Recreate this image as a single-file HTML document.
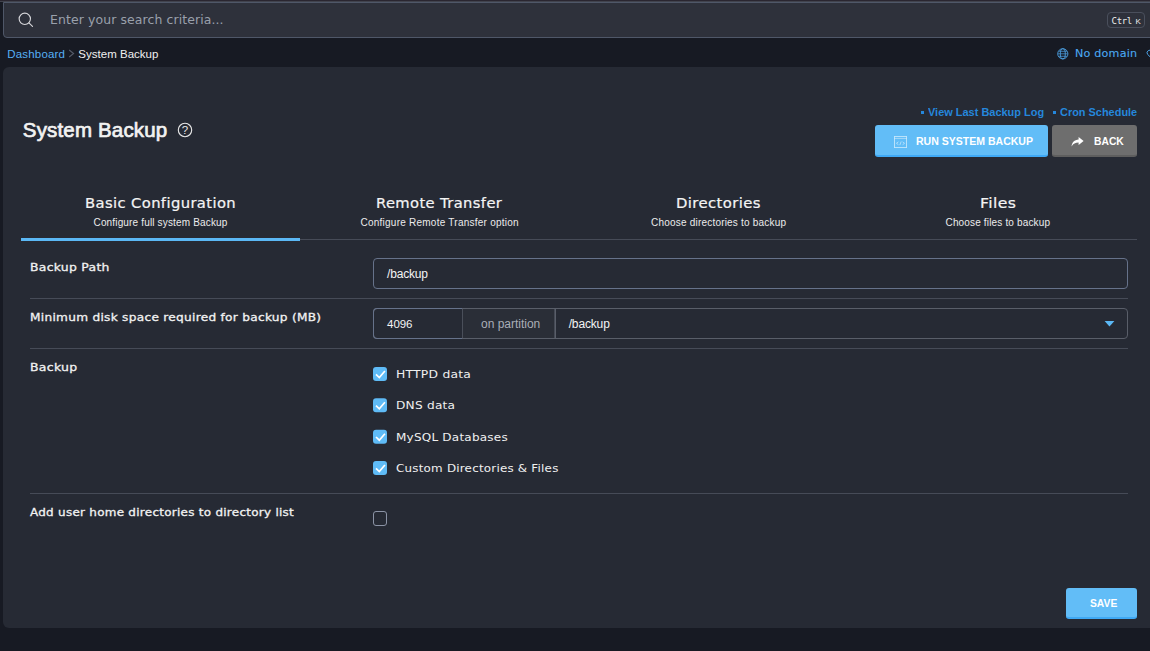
<!DOCTYPE html>
<html><head><meta charset="utf-8"><title>System Backup</title>
<style>
*{box-sizing:border-box;margin:0;padding:0}
html,body{width:1150px;height:651px;overflow:hidden;background:#171a23;font-family:"Liberation Sans",sans-serif;color:#f0f0f0}
.a,.t{position:absolute}
.t{line-height:20px;white-space:nowrap}
.ls{font-family:"Liberation Sans",sans-serif}
.dj{font-family:"DejaVu Sans","Liberation Sans",sans-serif}
.hr{position:absolute;height:1px;background:#464b57}
.box{position:absolute;border:1px solid #66728a;border-radius:4px}
.cb{position:absolute;left:373px;width:14px;height:14px;border-radius:3px;background:#5fbbf6}
.cb svg{display:block}
</style></head><body>
<div class="a" style="left:0;top:0;width:1150px;height:2px;background:#2a2630;border-bottom:1px solid #41434d"></div>
<div class="a" style="left:3px;top:2px;width:1160px;height:36px;background:#2e313b;border:1px solid #4f5768;border-radius:0 0 0 4px"></div>
<svg class="a" style="left:17px;top:12px" width="18" height="17" viewBox="0 0 18 17"><circle cx="7.8" cy="6.8" r="5.65" fill="none" stroke="#d6d6da" stroke-width="1.15"/><path d="M11.9 10.9L15.5 14.4" stroke="#d6d6da" stroke-width="1.15" stroke-linecap="round"/></svg>
<div class="t dj" style="left:49.6px;top:10px;font-size:12px;letter-spacing:0.10px;color:#9aa0ab;transform:scaleX(1.0371);transform-origin:0 0;">Enter your search criteria...</div>
<div class="a" style="left:1107px;top:12px;width:38px;height:16px;border:1px solid #4a4f5c;border-radius:4px"></div>
<div class="t" style="left:1111.6px;top:11px;font-family:'DejaVu Sans Mono','Liberation Mono',monospace;font-size:9px;letter-spacing:-.35px;color:#ececec">Ctrl</div>
<div class="t ls" style="left:1135.6px;top:12px;font-size:8px;color:#ececec">K</div>
<div class="t ls" style="left:7.2px;top:44px;font-size:11.5px;letter-spacing:0.19px;color:#56aff4;">Dashboard</div>
<svg class="a" style="left:68px;top:49px" width="7" height="9" viewBox="0 0 7 9"><path d="M1.2 1L5.6 4.5 1.2 8" fill="none" stroke="#555b69" stroke-width="1.1"/></svg>
<div class="t ls" style="left:78.3px;top:44px;font-size:11.5px;letter-spacing:0.02px;color:#f0f0f0;">System Backup</div>
<svg class="a" style="left:1057px;top:48px" width="12" height="12" viewBox="0 0 12 12" fill="none" stroke="#4fa6ea" stroke-width=".85"><circle cx="5.8" cy="5.8" r="5.1"/><ellipse cx="5.8" cy="5.8" rx="2.5" ry="5.1"/><path d="M.8 5.8h10M1.7 3.3h8.2M1.7 8.3h8.2" stroke-width=".7"/></svg>
<div class="t dj" style="left:1074.9px;top:44px;font-size:11.0px;letter-spacing:0.20px;color:#4ba9f2;-webkit-text-stroke:0.1px #4ba9f2;transform:scaleX(1.0123);transform-origin:0 0;">No domain</div>
<svg class="a" style="left:1146px;top:49px" width="12" height="11" viewBox="0 0 12 11" fill="none" stroke="#4fa6ea" stroke-width="1"><path d="M6 9.6L1.5 5.3A2.6 2.6 0 0 1 6 2.4 2.6 2.6 0 0 1 10.5 5.3Z"/></svg>
<div class="a" style="left:3px;top:67px;width:1160px;height:561px;background:#262a34;border-radius:6px 0 0 6px"></div>
<div class="t ls" style="left:22.8px;top:120px;font-size:20.5px;letter-spacing:0.17px;color:#f2f2f2;-webkit-text-stroke:0.7px #f2f2f2;">System Backup</div>
<svg class="a" style="left:177px;top:122px" width="16" height="16" viewBox="0 0 16 16"><circle cx="8" cy="8" r="6.7" fill="none" stroke="#e8e8e8" stroke-width="1.1"/><text x="8" y="11.9" font-family="Liberation Sans,sans-serif" font-size="11.5" fill="#e8e8e8" text-anchor="middle">?</text></svg>
<div class="a" style="left:921px;top:111px;width:3px;height:3px;background:#2587dc"></div>
<div class="t ls" style="left:928.1px;top:102px;font-size:11.5px;letter-spacing:0.00px;color:#2587dc;font-weight:bold;transform:scaleX(0.953);transform-origin:0 0;">View Last Backup Log</div>
<div class="a" style="left:1053px;top:111px;width:3px;height:3px;background:#2587dc"></div>
<div class="t ls" style="left:1060.1px;top:102px;font-size:11.5px;letter-spacing:0.00px;color:#2587dc;font-weight:bold;transform:scaleX(0.9512);transform-origin:0 0;">Cron Schedule</div>
<div class="a" style="left:875px;top:125px;width:173px;height:32px;background:#62bdf7;border-bottom:2px solid #3fa9f5;border-radius:3px"></div>
<svg class="a" style="left:893px;top:135px" width="15" height="14" viewBox="0 0 15 14" fill="none" stroke="#fff" stroke-opacity=".62" stroke-width=".9"><rect x="1.45" y="1.45" width="12.1" height="11.1"/><path d="M1.4 3.4h12.2" stroke-width=".7"/><path d="M5.4 6.9L3.5 8.3 5.4 9.7M8.2 6.5L6.8 10.1M9.6 6.9L11.5 8.3 9.6 9.7" stroke-width=".8"/></svg>
<div class="t ls" style="left:916.3px;top:131px;font-size:11.5px;letter-spacing:0.00px;color:#fff;font-weight:bold;transform:scaleX(0.9152);transform-origin:0 0;">RUN SYSTEM BACKUP</div>
<div class="a" style="left:1052px;top:125px;width:85px;height:32px;background:#6e6e6e;border-bottom:2px solid #5e5e5e;border-radius:3px"></div>
<svg class="a" style="left:1071px;top:137px" width="13" height="10" viewBox="0 0 13 10"><path d="M7.6 0L12.6 4 7.6 8V5.6C4.4 5.6 2.2 6.6 .6 9.6 .9 5.4 3.4 2.8 7.6 2.5Z" fill="#fff"/></svg>
<div class="t ls" style="left:1093.7px;top:131px;font-size:11.5px;letter-spacing:0.00px;color:#fff;font-weight:bold;transform:scaleX(0.8958);transform-origin:0 0;">BACK</div>
<div class="t dj" style="left:84.7px;top:193px;font-size:13.5px;letter-spacing:0.35px;color:#f4f4f4;-webkit-text-stroke:0.2px #f4f4f4;transform:scaleX(1.0929);transform-origin:0 0;">Basic Configuration</div>
<div class="t dj" style="left:375.7px;top:193px;font-size:13.5px;letter-spacing:0.35px;color:#f4f4f4;-webkit-text-stroke:0.2px #f4f4f4;transform:scaleX(1.0892);transform-origin:0 0;">Remote Transfer</div>
<div class="t dj" style="left:676.3px;top:193px;font-size:13.5px;letter-spacing:0.35px;color:#f4f4f4;-webkit-text-stroke:0.2px #f4f4f4;transform:scaleX(1.0986);transform-origin:0 0;">Directories</div>
<div class="t dj" style="left:979.6px;top:193px;font-size:13.5px;letter-spacing:0.35px;color:#f4f4f4;-webkit-text-stroke:0.2px #f4f4f4;transform:scaleX(1.1579);transform-origin:0 0;">Files</div>
<div class="t ls" style="left:93.5px;top:213px;font-size:10px;letter-spacing:0.16px;color:#ececec;">Configure full system Backup</div>
<div class="t ls" style="left:360.5px;top:213px;font-size:10px;letter-spacing:0.24px;color:#ececec;">Configure Remote Transfer option</div>
<div class="t ls" style="left:651.1px;top:213px;font-size:10px;letter-spacing:0.20px;color:#ececec;">Choose directories to backup</div>
<div class="t ls" style="left:945.5px;top:213px;font-size:10px;letter-spacing:0.16px;color:#ececec;">Choose files to backup</div>
<div class="hr" style="left:21px;top:239px;width:1116px"></div>
<div class="a" style="left:21px;top:238px;width:279px;height:3px;background:#5bb8f5"></div>
<div class="t dj" style="left:30.1px;top:258px;font-size:11px;letter-spacing:0.25px;color:#f2f2f2;-webkit-text-stroke:0.3px #f2f2f2;transform:scaleX(1.1269);transform-origin:0 0;">Backup Path</div>
<div class="box" style="left:373px;top:258px;width:755px;height:31px"></div>
<div class="t ls" style="left:387.1px;top:264px;font-size:12px;letter-spacing:-0.19px;color:#f4f4f4;">/backup</div>
<div class="hr" style="left:30px;top:298px;width:1098px"></div>
<div class="t dj" style="left:30.1px;top:308px;font-size:11px;letter-spacing:0.25px;color:#f2f2f2;-webkit-text-stroke:0.3px #f2f2f2;transform:scaleX(1.1049);transform-origin:0 0;">Minimum disk space required for backup (MB)</div>
<div class="box" style="left:373px;top:308px;width:755px;height:31px;border-color:#595e69"></div>
<div class="a" style="left:462px;top:309px;width:94px;height:29px;background:#2a2e37;border-left:1px solid #4a4f5a;box-shadow:inset -1px 0 0 #595e69,inset -2px 0 0 #454a55"></div>
<div class="box" style="left:373px;top:308px;width:89px;height:31px;border-right:0;border-radius:4px 0 0 4px"></div>
<div class="t ls" style="left:387.1px;top:314px;font-size:11.5px;letter-spacing:-0.06px;color:#f4f4f4;">4096</div>
<div class="t ls" style="left:481.1px;top:314px;font-size:12px;letter-spacing:-0.02px;color:#a9adb6;">on partition</div>
<div class="t ls" style="left:568.7px;top:314px;font-size:12px;letter-spacing:-0.15px;color:#f4f4f4;">/backup</div>
<svg class="a" style="left:1104px;top:321px" width="11" height="6" viewBox="0 0 11 6"><path d="M.6 0h9.8L5.5 5.4z" fill="#5bb8f5"/></svg>
<div class="hr" style="left:30px;top:348px;width:1098px"></div>
<div class="t dj" style="left:30.1px;top:358px;font-size:11px;letter-spacing:0.25px;color:#f2f2f2;-webkit-text-stroke:0.3px #f2f2f2;transform:scaleX(1.1342);transform-origin:0 0;">Backup</div>
<svg class="a" style="left:372px;top:366px" width="16" height="17" viewBox="0 0 16 17"><g transform="translate(1 1.0)"><rect width="14" height="14" rx="3" fill="#5fbbf6"/><path d="M3 7.3L6.3 10.5 11.9 4" fill="none" stroke="#fff" stroke-width="1.7"/></g></svg>
<div class="t dj" style="left:395.8px;top:365px;font-size:11px;letter-spacing:0.20px;color:#f0f0f0;transform:scaleX(1.1226);transform-origin:0 0;">HTTPD data</div>
<svg class="a" style="left:372px;top:397px" width="16" height="17" viewBox="0 0 16 17"><g transform="translate(1 1.3)"><rect width="14" height="14" rx="3" fill="#5fbbf6"/><path d="M3 7.3L6.3 10.5 11.9 4" fill="none" stroke="#fff" stroke-width="1.7"/></g></svg>
<div class="t dj" style="left:395.8px;top:396px;font-size:11px;letter-spacing:0.20px;color:#f0f0f0;transform:scaleX(1.1069);transform-origin:0 0;">DNS data</div>
<svg class="a" style="left:372px;top:428px" width="16" height="17" viewBox="0 0 16 17"><g transform="translate(1 1.7)"><rect width="14" height="14" rx="3" fill="#5fbbf6"/><path d="M3 7.3L6.3 10.5 11.9 4" fill="none" stroke="#fff" stroke-width="1.7"/></g></svg>
<div class="t dj" style="left:395.8px;top:428px;font-size:11px;letter-spacing:0.20px;color:#f0f0f0;transform:scaleX(1.0918);transform-origin:0 0;">MySQL Databases</div>
<svg class="a" style="left:372px;top:460px" width="16" height="17" viewBox="0 0 16 17"><g transform="translate(1 1.0)"><rect width="14" height="14" rx="3" fill="#5fbbf6"/><path d="M3 7.3L6.3 10.5 11.9 4" fill="none" stroke="#fff" stroke-width="1.7"/></g></svg>
<div class="t dj" style="left:396.3px;top:459px;font-size:11px;letter-spacing:0.20px;color:#f0f0f0;transform:scaleX(1.0816);transform-origin:0 0;">Custom Directories &amp; Files</div>
<div class="hr" style="left:30px;top:493px;width:1098px"></div>
<div class="t dj" style="left:30.2px;top:503px;font-size:11px;letter-spacing:0.25px;color:#f2f2f2;-webkit-text-stroke:0.3px #f2f2f2;transform:scaleX(1.0873);transform-origin:0 0;">Add user home directories to directory list</div>
<div class="a" style="left:373px;top:511px;width:14px;height:15px;border:1px solid #8b93a5;border-radius:3px"></div>
<div class="a" style="left:1066px;top:588px;width:71px;height:31px;background:#62bdf7;border-bottom:2px solid #3fa9f5;border-radius:3px"></div>
<div class="t ls" style="left:1089.5px;top:593px;font-size:11.5px;letter-spacing:0.00px;color:#fff;font-weight:bold;transform:scaleX(0.8942);transform-origin:0 0;">SAVE</div>
</body></html>
